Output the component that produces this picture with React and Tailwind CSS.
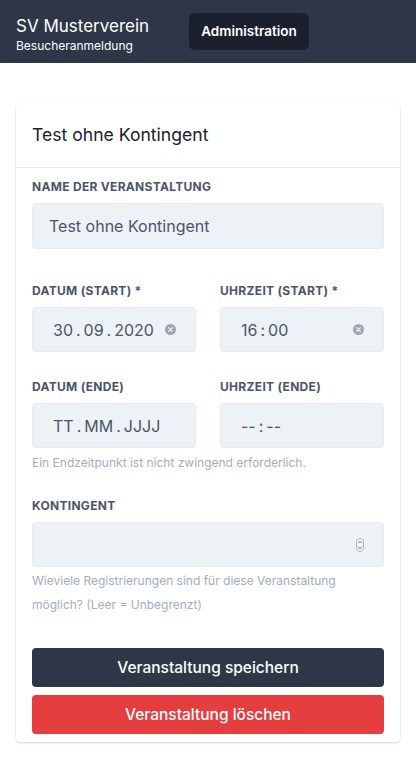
import React from 'react';

const font = { fontFamily: 'Inter, "Noto Sans", sans-serif' };

const ClearIcon = () => (
  <svg width="11" height="11" viewBox="0 0 12 12" className="shrink-0">
    <circle cx="6" cy="6" r="6" fill="#a0a6b0" />
    <path d="M4 4 L8 8 M8 4 L4 8" stroke="#edf2f7" strokeWidth="1.4" strokeLinecap="round" />
  </svg>
);

const Spinner = () => (
  <svg width="8" height="14" viewBox="0 0 8 14" className="shrink-0">
    <rect x="0.5" y="0.5" width="7" height="13" rx="3.5" fill="#fff" stroke="#9aa0a8" strokeWidth="0.8" />
    <path d="M2.3 5.2 L4 3.4 L5.7 5.2" fill="none" stroke="#444" strokeWidth="0.9" />
    <path d="M2.3 8.8 L4 10.6 L5.7 8.8" fill="none" stroke="#444" strokeWidth="0.9" />
  </svg>
);

const Label = ({ children, className = '' }) => (
  <div className={`text-[12px] leading-4 font-bold uppercase tracking-wide text-[#4a5568] ${className}`}>
    {children}
  </div>
);

const Field = ({ children, className = '' }) => (
  <div className={`h-[45px] rounded bg-[#edf2f7] border border-[#e6ebf1] flex items-center text-[16px] text-[#4a5568] ${className}`}>
    {children}
  </div>
);

// segmented value like Safari's date / time inputs
const Segments = ({ parts, sep }) => (
  <span className="flex items-center">
    {parts.map((p, i) => (
      <React.Fragment key={i}>
        {i > 0 && <span className="mx-[3px]">{sep}</span>}
        <span>{p}</span>
      </React.Fragment>
    ))}
  </span>
);

export default function App() {
  return (
    <div className="min-h-screen bg-white" style={font}>
      {/* Header */}
      <div className="h-[63px] bg-[#2d3748] flex items-center px-4">
        <div className="w-[173px] self-start pt-[14px]">
          <div className="text-[17px] leading-6 text-white">SV Musterverein</div>
          <div className="text-[12px] leading-4 text-white">Besucheranmeldung</div>
        </div>
        <div className="h-[37px] w-[120px] rounded-md bg-[#1a202c] text-white text-[13.5px] font-semibold flex items-center justify-center">
          Administration
        </div>
      </div>

      {/* Card */}
      <div className="mx-4 mt-10 bg-white shadow-[0_1px_3px_rgba(0,0,0,0.12),0_1px_2px_rgba(0,0,0,0.06)] rounded-sm">
        <div className="h-[65px] px-4 flex items-center border-b border-[#e5ebf2]">
          <div className="text-[17.6px] text-[#1a202c]">Test ohne Kontingent</div>
        </div>

        <div className="px-4 pb-2">
          <Label className="mt-[11px]">Name der Veranstaltung</Label>
          <Field className="mt-[8px] h-[46px] px-4">Test ohne Kontingent</Field>

          <div className="grid grid-cols-2 gap-x-6 mt-[34px]">
            <div>
              <Label>Datum (Start) *</Label>
              <Field className="mt-2 pl-5 pr-[19px] justify-between">
                <Segments parts={['30', '09', '2020']} sep="." />
                <ClearIcon />
              </Field>
            </div>
            <div>
              <Label>Uhrzeit (Start) *</Label>
              <Field className="mt-2 pl-5 pr-[19px] justify-between">
                <Segments parts={['16', '00']} sep=":" />
                <ClearIcon />
              </Field>
            </div>
          </div>

          <div className="grid grid-cols-2 gap-x-6 mt-[27px]">
            <div>
              <Label>Datum (Ende)</Label>
              <Field className="mt-2 pl-5">
                <Segments parts={['TT', 'MM', 'JJJJ']} sep="." />
              </Field>
            </div>
            <div>
              <Label>Uhrzeit (Ende)</Label>
              <Field className="mt-2 pl-5">
                <Segments parts={['--', '--']} sep=":" />
              </Field>
            </div>
          </div>
          <div className="text-[12px] leading-6 text-[#a0aec0] mt-[3px]">
            Ein Endzeitpunkt ist nicht zwingend erforderlich.
          </div>

          <Label className="mt-[23px]">Kontingent</Label>
          <Field className="mt-2 justify-end pr-[19px]">
            <Spinner />
          </Field>
          <div className="text-[12px] leading-6 text-[#a0aec0] mt-[2px] pr-8">
            Wieviele Registrierungen sind für diese Veranstaltung möglich? (Leer = Unbegrenzt)
          </div>

          <button className="mt-[31px] w-full h-[39px] rounded bg-[#2d3748] text-white text-[15.5px] font-medium flex items-center justify-center">
            Veranstaltung speichern
          </button>
          <button className="mt-2 w-full h-[39px] rounded bg-[#e53e3e] text-white text-[15.5px] font-medium flex items-center justify-center">
            Veranstaltung löschen
          </button>
        </div>
      </div>
    </div>
  );
}
